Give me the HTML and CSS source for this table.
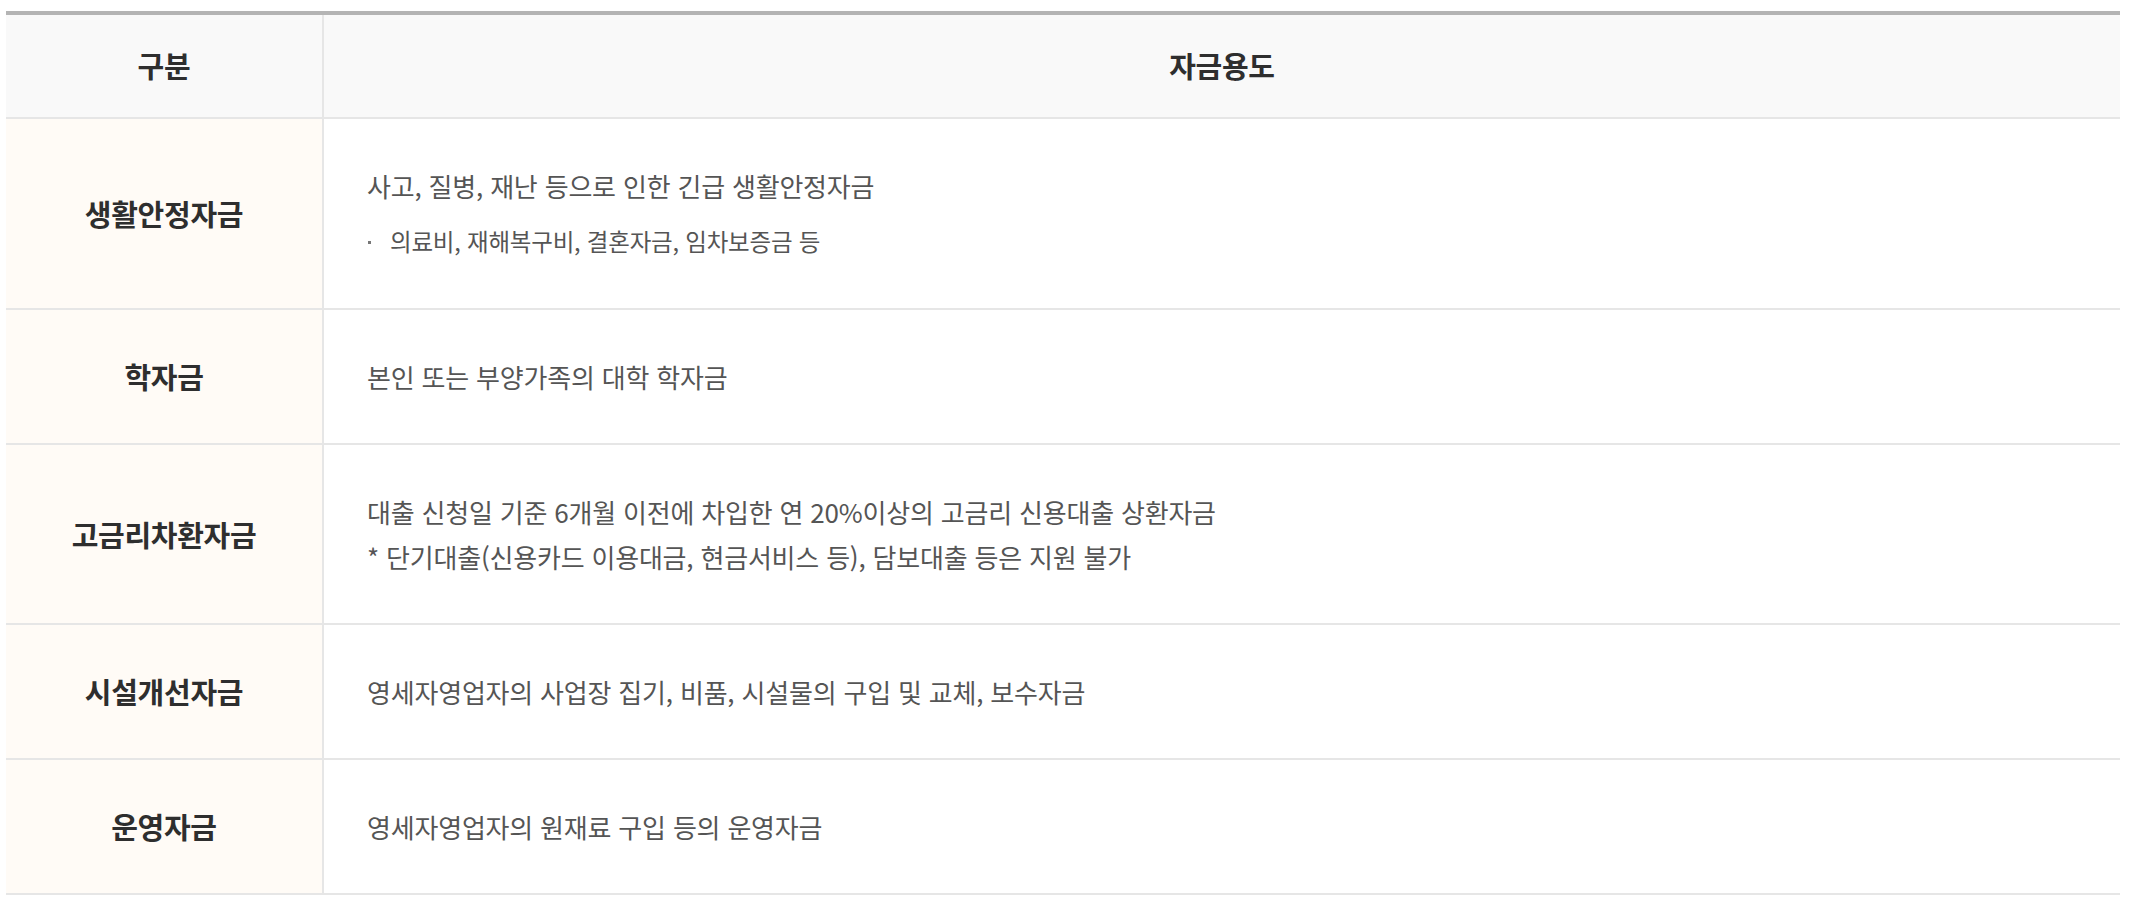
FILE: index.html
```html
<!DOCTYPE html>
<html lang="ko">
<head>
<meta charset="utf-8">
<title>자금용도</title>
<link rel="stylesheet" href="styles.css">
</head>
<body>
<div class="wrap">
  <table class="fund-table">
    <colgroup>
      <col class="col-kind">
      <col class="col-use">
    </colgroup>
    <thead>
      <tr>
        <th>구분</th>
        <th>자금용도</th>
      </tr>
    </thead>
    <tbody>
      <tr>
        <th scope="row">생활안정자금</th>
        <td>
          <p>사고, 질병, 재난 등으로 인한 긴급 생활안정자금</p>
          <ul class="dot-list">
            <li>의료비, 재해복구비, 결혼자금, 임차보증금 등</li>
          </ul>
        </td>
      </tr>
      <tr>
        <th scope="row">학자금</th>
        <td><p>본인 또는 부양가족의 대학 학자금</p></td>
      </tr>
      <tr>
        <th scope="row">고금리차환자금</th>
        <td>
          <p>대출 신청일 기준 6개월 이전에 차입한 연 20%이상의 고금리 신용대출 상환자금</p>
          <p>* 단기대출(신용카드 이용대금, 현금서비스 등), 담보대출 등은 지원 불가</p>
        </td>
      </tr>
      <tr>
        <th scope="row">시설개선자금</th>
        <td><p>영세자영업자의 사업장 집기, 비품, 시설물의 구입 및 교체, 보수자금</p></td>
      </tr>
      <tr>
        <th scope="row">운영자금</th>
        <td><p>영세자영업자의 원재료 구입 등의 운영자금</p></td>
      </tr>
    </tbody>
  </table>
</div>
</body>
</html>
```

FILE: styles.css
```css
html, body {
  margin: 0;
  padding: 0;
  background: #ffffff;
}

body {
  font-family: "Noto Sans CJK KR", "Noto Sans", sans-serif;
  color: #555555;
}

.wrap {
  padding: 11px 24px 0 6px;
}

.fund-table {
  width: 2114px;
  border-collapse: collapse;
  border-top: 4px solid #b4b4b4;
  table-layout: fixed;
}

.col-kind {
  width: 317px;
}

.fund-table th,
.fund-table td {
  border-bottom: 2px solid #e6e6e6;
  vertical-align: middle;
  line-height: 45px;
}

.fund-table thead th {
  background: #f9f9f9;
  font-size: 29px;
  font-weight: 700;
  color: #2e2e2e;
  text-align: center;
  letter-spacing: -0.3px;
  padding: 28px 0 29px;
}

.fund-table thead th:first-child {
  border-right: 2px solid #e6e6e6;
}

.fund-table tbody th {
  background: #fffbf6;
  font-size: 29px;
  font-weight: 700;
  color: #2e2e2e;
  text-align: center;
  letter-spacing: -0.3px;
  border-right: 2px solid #e6e6e6;
  padding: 44px 0;
}

.fund-table td {
  font-size: 26px;
  letter-spacing: -0.2px;
  color: #555555;
  text-align: left;
  padding: 44px 20px 44px 43px;
}

.fund-table td p {
  margin: 0;
}

.dot-list {
  list-style: none;
  margin: 11px 0 0;
  padding: 0;
}

.dot-list li {
  position: relative;
  padding-left: 23px;
  font-size: 23.5px;
  line-height: 45px;
}

.dot-list li::before {
  content: "";
  position: absolute;
  left: 1px;
  top: 22px;
  width: 3px;
  height: 3px;
  background: #777777;
}
```
